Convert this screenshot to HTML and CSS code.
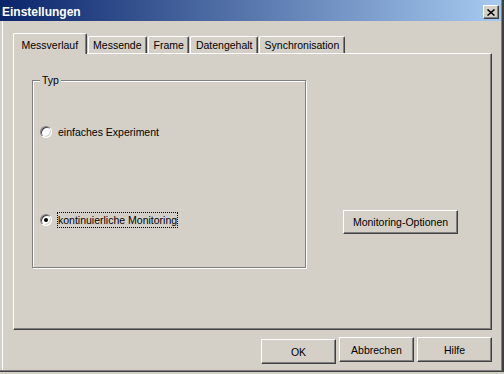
FILE: index.html
```html
<!DOCTYPE html>
<html lang="de">
<head>
    <meta charset="UTF-8">
    <meta name="viewport" content="width=device-width, initial-scale=1.0">
    <title>Einstellungen</title>
    <link rel="stylesheet" href="styles.css">
</head>
<body>
    <div class="window">
        <div class="frame">
            <div class="titlebar">
                <span class="title">Einstellungen</span>
                <button class="close-button">
                    <svg width="8" height="7" viewBox="0 0 8 7" xmlns="http://www.w3.org/2000/svg">
                        <path d="M0.5 0.5L7.5 6.5M7.5 0.5L0.5 6.5" stroke="#000" stroke-width="1.5"/>
                    </svg>
                </button>
            </div>

            <div class="client">
                <div class="tabs">
                    <div class="tab active">Messverlauf</div>
                    <div class="tab">Messende</div>
                    <div class="tab">Frame</div>
                    <div class="tab">Datengehalt</div>
                    <div class="tab">Synchronisation</div>
                </div>

                <div class="panel">
                    <fieldset class="group">
                        <legend>Typ</legend>
                        <div class="option option-first">
                            <span class="radio"></span>
                            <span class="option-label">einfaches Experiment</span>
                        </div>
                        <div class="option option-second">
                            <span class="radio checked"></span>
                            <span class="option-label focused">kontinuierliche Monitoring</span>
                        </div>
                    </fieldset>
                    <button class="button monitoring">Monitoring-Optionen</button>
                </div>

                <div class="footer">
                    <button class="button ok">OK</button>
                    <button class="button">Abbrechen</button>
                    <button class="button">Hilfe</button>
                </div>
            </div>
        </div>
    </div>
</body>
</html>
```

FILE: styles.css
```css
body {
    margin: 0;
    background: #d4d0c8;
    font-family: "Liberation Sans", Arial, sans-serif;
    font-size: 10.5px;
    color: #000;
}

.window {
    width: 504px;
    height: 372px;
    box-sizing: border-box;
    border-right: 2px solid #404040;
    border-bottom: 1px solid #404040;
}

.frame {
    height: 100%;
    box-sizing: border-box;
    border-right: 1px solid #808080;
    border-bottom: 1px solid #808080;
    display: flex;
    flex-direction: column;
}

.titlebar {
    height: 21px;
    box-sizing: border-box;
    padding: 5px 2px 2px 2px;
    display: flex;
    justify-content: space-between;
    background: linear-gradient(to right, #0a246a, #a6caf0);
}

.title {
    color: #fff;
    font-weight: bold;
    font-size: 12px;
    line-height: 15px;
}

.close-button {
    width: 16px;
    height: 14px;
    padding: 0;
    box-sizing: border-box;
    background: #d4d0c8;
    border: 1px solid;
    border-color: #fff #404040 #404040 #fff;
    box-shadow: inset -1px -1px #808080;
    display: flex;
    align-items: center;
    justify-content: center;
}

.client {
    flex: 1;
    margin-left: 2px;
    border-left: 1px solid #fff;
    display: flex;
    flex-direction: column;
}

.tabs {
    display: flex;
    align-items: flex-end;
    margin: 12px 0 0 10px;
    height: 20px;
}

.tab {
    line-height: 16px;
    padding: 0 4.5px;
    margin-right: 1px;
    border-top: 1px solid #fff;
    border-left: 1px solid #fff;
    border-right: 1px solid #404040;
    border-radius: 2px 2px 0 0;
    box-shadow: inset -1px 0 #808080;
    white-space: nowrap;
}

.tab.active {
    position: relative;
    z-index: 1;
    background: #d4d0c8;
    padding: 3px 7.5px 1px;
    margin-bottom: -1px;
}

.panel {
    height: 277px;
    box-sizing: border-box;
    margin: 0 9px 0 10px;
    border-top: 1px solid #fff;
    border-left: 1px solid #fff;
    border-right: 1px solid #404040;
    border-bottom: 1px solid #404040;
    box-shadow: inset -1px -1px #808080;
    display: flex;
    align-items: flex-start;
}

.group {
    box-sizing: border-box;
    width: 274px;
    height: 194px;
    margin: 20px 0 0 18px;
    padding: 0;
    border: 1px solid #808080;
    box-shadow: inset 1px 1px #fff, 1px 1px #fff;
}

.group legend {
    margin-left: 7px;
    padding: 0 2px;
    line-height: 13px;
    background: #d4d0c8;
}

.option {
    display: flex;
    align-items: center;
    height: 16px;
    padding-left: 7px;
}

.option-first {
    margin-top: 37px;
}

.option-second {
    margin-top: 72px;
}

.radio {
    width: 12px;
    height: 12px;
    box-sizing: border-box;
    border-radius: 50%;
    border: 1px solid;
    border-color: #808080 #fff #fff #808080;
    background: #fff;
    box-shadow: inset 1px 1px #404040, inset -1px -1px #d4d0c8;
    display: flex;
    align-items: center;
    justify-content: center;
}

.radio.checked::after {
    content: "";
    width: 4px;
    height: 4px;
    border-radius: 50%;
    background: #000;
}

.option-label {
    margin-left: 5px;
    line-height: 14px;
    border: 1px dotted transparent;
    white-space: nowrap;
}

.option-label.focused {
    border-color: #000;
}

.button {
    width: 75px;
    height: 25px;
    box-sizing: border-box;
    padding: 0;
    font: inherit;
    color: #000;
    background: #d4d0c8;
    border: 1px solid;
    border-color: #fff #404040 #404040 #fff;
    box-shadow: inset -1px -1px #808080;
}

.button.monitoring {
    width: 115px;
    height: 24px;
    margin: 156px 0 0 37px;
}

.footer {
    display: flex;
    justify-content: flex-end;
    align-items: flex-start;
    gap: 3px;
    margin-top: 7px;
    padding-right: 9px;
}

.button.ok {
    margin-top: 2px;
}
```
